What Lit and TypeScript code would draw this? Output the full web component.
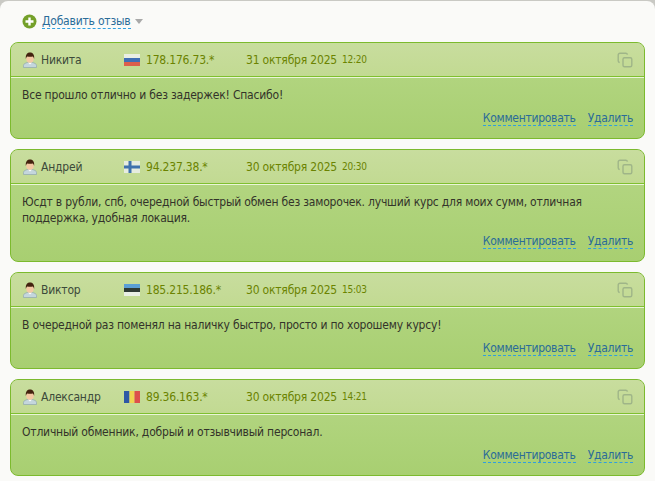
import { LitElement, html, css, svg } from "lit";
import { customElement } from "lit/decorators.js";

const flags: Record<string, string[]> = {
  ru: ["#e9efe4", "#3f6fb5", "#dc5f4c"],
  ee: ["#5a9fd6", "#2f3a35", "#e9efe4"],
};

const flag = (code: string) => {
  if (code === "fi")
    return svg`<svg class="flag" width="16" height="12" viewBox="0 0 16 12"><rect width="16" height="12" fill="#e6ecdf"/><rect x="4.500" width="3" height="12" fill="#3f72ad"/><rect y="4.500" width="16" height="3" fill="#3f72ad"/></svg>`;
  if (code === "ro")
    return svg`<svg class="flag" width="16" height="12" viewBox="0 0 16 12"><rect width="5.500" height="12" fill="#2d58a6"/><rect x="5.500" width="5" height="12" fill="#efd352"/><rect x="10.500" width="5.500" height="12" fill="#dd4f4c"/></svg>`;
  const c = flags[code];
  return svg`<svg class="flag" width="16" height="12" viewBox="0 0 16 12"><rect width="16" height="4" fill="${c[0]}"/><rect y="4" width="16" height="4" fill="${c[1]}"/><rect y="8" width="16" height="4" fill="${c[2]}"/></svg>`;
};

const user = svg`<svg class="user" width="16" height="16" viewBox="0 0 16 16">
  <path d="M1.500 15.500v-2.200c0-1.500 2.200-2.300 3.800-2.800h5.400c1.600.5 3.800 1.300 3.800 2.800v2.200z" fill="#c4d6dc" stroke="#8fa7ad" stroke-width=".7"/>
  <path d="M6 10.500 8 12.500 10 10.500z" fill="#fff"/>
  <ellipse cx="8" cy="6.500" rx="3.800" ry="4.200" fill="#f4c9a4"/>
  <path d="M3.900 7C3.200 2.200 5.600.4 8 .4s4.800 1.800 4.100 6.600c-.4-1.600-.8-2.300-1.500-2.600-1.800.5-3.500.5-5.200 0-.7.300-1.100 1-1.500 2.600z" fill="#43230f"/>
</svg>`;

const copy = svg`<svg class="copy" width="16" height="16" viewBox="0 0 16 16" fill="none" stroke="#9fb588" stroke-width="1.400">
  <path d="M2.700 10.500c-.9-.2-1.500-.9-1.500-1.800V3c0-1 .8-1.800 1.800-1.800h5.700c.9 0 1.600.6 1.800 1.500"/>
  <rect x="6" y="5.700" width="8.800" height="9.100" rx="1.500"/>
</svg>`;

const reviews = [
  { name: "Никита", flag: "ru", ip: "178.176.73.*", date: "31 октября 2025", time: "12:20", text: "Все прошло отлично и без задержек! Спасибо!" },
  { name: "Андрей", flag: "fi", ip: "94.237.38.*", date: "30 октября 2025", time: "20:30", text: "Юсдт в рубли, спб, очередной быстрый обмен без заморочек. лучший курс для моих сумм, отличная поддержка, удобная локация." },
  { name: "Виктор", flag: "ee", ip: "185.215.186.*", date: "30 октября 2025", time: "15:03", text: "В очередной раз поменял на наличку быстро, просто и по хорошему курсу!" },
  { name: "Александр", flag: "ro", ip: "89.36.163.*", date: "30 октября 2025", time: "14:21", text: "Отличный обменник, добрый и отзывчивый персонал." },
];

@customElement("app-root")
export class AppRoot extends LitElement {
  static styles = css`
    :host {
      display: block;
      height: 481px;
      overflow: hidden;
      background: #c9c9c4;
      font-family: "DejaVu Sans Condensed", "DejaVu Sans", sans-serif;
      font-size: 12px;
      letter-spacing: -0.2px;
      color: #33332a;
    }
    .page {
      height: 481px;
      box-sizing: border-box;
      padding: 0 10px;
      background: #fafaf8;
      border-radius: 8px 8px 0 0;
      margin-top: 1px;
    }
    .add {
      display: flex;
      align-items: center;
      height: 41px;
      padding-left: 12px;
      box-sizing: border-box;
    }
    .plus { margin-right: 5px; }
    .link {
      color: #2a6c98;
      border-bottom: 1px dashed #2f9fe0;
      line-height: 14px;
    }
    .actions .link { letter-spacing: -0.27px; }
    .caret {
      margin-left: 4px;
      width: 0;
      height: 0;
      border: 4px solid transparent;
      border-top: 5px solid #a9a9a9;
      border-bottom: 0;
    }
    .list { display: flex; flex-direction: column; gap: 10px; }
    .card {
      border: 1px solid #7cba2e;
      border-radius: 8px;
      background: linear-gradient(#b6d786, #a8cf71);
    }
    .head {
      display: flex;
      align-items: center;
      height: 33px;
      border-bottom: 1px solid #7fc02f;
      box-shadow: 0 1px 0 #eaf5d8;
      border-radius: 7px 7px 0 0;
      background: linear-gradient(#c8dd9e, #c2da92);
      padding: 0 11px;
    }
    .user { margin-right: 3px; flex: none; }
    .name { width: 83px; color: #3c4a3a; }
    .flag { margin-right: 6px; flex: none; }
    .ip { width: 100px; color: #6b8300; }
    .date { color: #6b8300; }
    .time { font-size: 10px; margin-left: 5px; color: #6b8300; }
    .copy { margin-left: auto; }
    .body { padding: 10px 11px 0; line-height: 16px; }
    .actions {
      display: flex;
      justify-content: flex-end;
      gap: 12px;
      padding: 8px 11px 12px;
      line-height: 14px;
    }
  `;

  render() {
    return html`<div class="page">
      <div class="add">
        <svg class="plus" width="15" height="15" viewBox="0 0 15 15"><circle cx="7.500" cy="7.500" r="7" fill="#74a02a"/><path d="M7.500 3.500v8M3.500 7.500h8" stroke="#fff" stroke-width="2.400"/></svg>
        <span class="link">Добавить отзыв</span><span class="caret"></span>
      </div>
      <div class="list">
        ${reviews.map(
          (r) => html`<div class="card">
            <div class="head">
              ${user}<span class="name">${r.name}</span>${flag(r.flag)}<span class="ip">${r.ip}</span>
              <span class="date">${r.date}</span><span class="time">${r.time}</span>
              ${copy}
            </div>
            <div class="body">${r.text}</div>
            <div class="actions"><span class="link">Комментировать</span><span class="link">Удалить</span></div>
          </div>`
        )}
      </div>
    </div>`;
  }
}
